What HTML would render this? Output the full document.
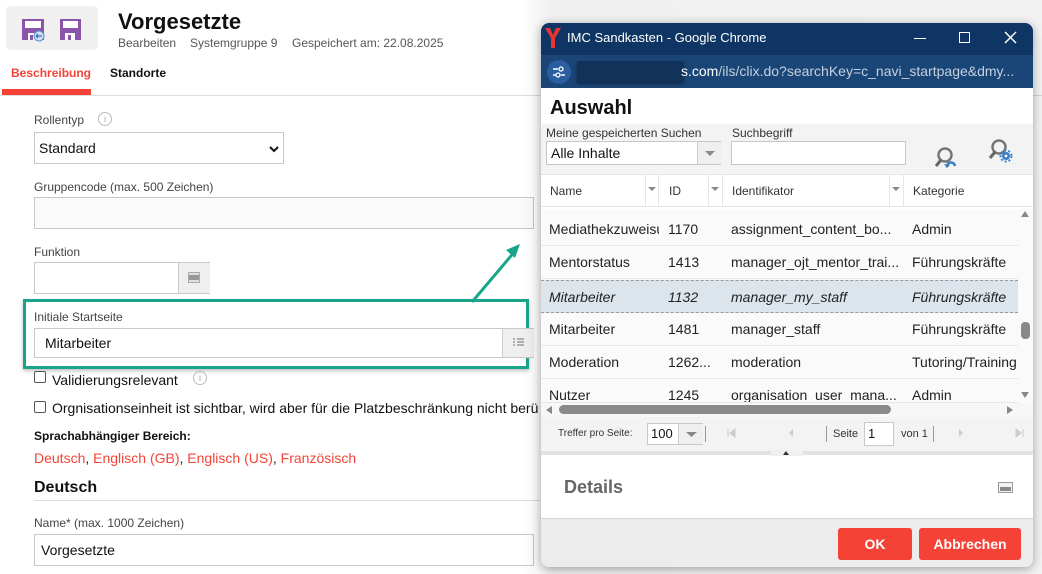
<!DOCTYPE html>
<html><head><meta charset="utf-8">
<style>
*{box-sizing:border-box;margin:0;padding:0}
body{width:1042px;height:574px;overflow:hidden;position:relative;background:#fff;font-family:"Liberation Sans",sans-serif;color:#222}
.a{position:absolute;white-space:nowrap}
.lbl{font-size:12px;color:#444}
.inp{position:absolute;border:1px solid #c8c8c8;background:#fff}
.btn{position:absolute;background:#efefef;border-left:1px solid #ccc;top:0;bottom:0}
.cb{position:absolute;width:12px;height:12px;border:1px solid #555;border-radius:2px;background:#fff}
.row{position:absolute;left:541px;width:477px;height:33px;border-bottom:1px solid #e8e8e8;font-size:14px;color:#222}
.row span{position:absolute;top:8px}
</style></head><body>
<!-- left page -->
<div class="a" style="left:6px;top:6px;width:92px;height:44px;background:#f0f0f0;border-radius:4px"></div>
<svg class="a" style="left:22px;top:18px" width="24" height="24" viewBox="0 0 24 24"><path d="M0 1h22v21H0z" fill="#8b55aa"/><path d="M3 3h16v7H3z" fill="#fff"/><path d="M6 15h8v7H6z" fill="#fff"/><path d="M8 17h3v5H8z" fill="#8b55aa"/><circle cx="17" cy="18" r="5" fill="#cfe1f4" stroke="#5b8fd0"/><path d="M14 18h6M14 18l2-2M14 18l2 2" stroke="#3b6fb7" stroke-width="1.2" fill="none"/></svg>
<svg class="a" style="left:60px;top:19px" width="22" height="22" viewBox="0 0 22 22"><path d="M0 0h21v21H0z" fill="#8b55aa"/><path d="M3 2h15v7H3z" fill="#fff"/><path d="M5 14h10v7H5z" fill="#fff"/><path d="M8 16h3v5H8z" fill="#8b55aa"/></svg>
<div class="a" style="left:118px;top:9px;font-size:22px;font-weight:bold;color:#111">Vorgesetzte</div>
<div class="a" style="left:118px;top:36px;font-size:12px;color:#555">Bearbeiten</div>
<div class="a" style="left:190px;top:36px;font-size:12px;color:#555">Systemgruppe 9</div>
<div class="a" style="left:292px;top:36px;font-size:12px;color:#555">Gespeichert am: 22.08.2025</div>
<div class="a" style="left:11px;top:66px;font-size:12px;font-weight:bold;color:#f44336">Beschreibung</div>
<div class="a" style="left:110px;top:66px;font-size:12px;font-weight:bold;color:#111">Standorte</div>
<div class="a" style="left:0;top:95px;width:1042px;height:1px;background:#ddd"></div>
<div class="a" style="left:2px;top:89px;width:89px;height:6px;background:#f44336"></div>

<div class="a lbl" style="left:34px;top:113px">Rollentyp</div>
<div class="a" style="left:98px;top:112px;width:14px;height:14px;border:1px solid #bbb;border-radius:50%;font-size:9px;color:#aaa;text-align:center;line-height:12px">i</div>
<div class="inp" style="left:34px;top:132px;width:250px;height:32px"><span class="a" style="left:4px;top:7px;font-size:14px;color:#111">Standard</span><svg class="a" style="left:234px;top:12px" width="10" height="8"><path d="M1 2l4 4 4-4" stroke="#111" stroke-width="2" fill="none"/></svg></div>
<div class="a lbl" style="left:34px;top:180px">Gruppencode (max. 500 Zeichen)</div>
<div class="inp" style="left:34px;top:197px;width:500px;height:32px;background:#fafafa"></div>
<div class="a lbl" style="left:34px;top:245px">Funktion</div>
<div class="inp" style="left:34px;top:262px;width:176px;height:32px"><div class="btn" style="left:143px;width:32px"><div class="a" style="left:10px;top:10px;width:10px;height:9px;background:#999;border:2px solid #e0e0e0;border-width:2px 0;box-shadow:0 0 0 1px #aaa"></div></div></div>
<div class="a" style="left:23px;top:299px;width:506px;height:70px;border:3px solid #18a58a;box-shadow:0 2px 4px rgba(0,0,0,.25)"></div>
<div class="a lbl" style="left:34px;top:310px">Initiale Startseite</div>
<div class="inp" style="left:34px;top:328px;width:500px;height:30px"><span class="a" style="left:10px;top:6px;font-size:14px;color:#111">Mitarbeiter</span><div class="btn" style="left:467px;width:32px"><svg class="a" style="left:9px;top:8px" width="13" height="11"><path d="M1 2h2M5 2h7M1 5h2M5 5h7M1 8h2M5 8h7" stroke="#999" stroke-width="1.6"/></svg></div></div>
<svg class="a" style="left:460px;top:236px" width="70" height="70"><path d="M12 66L56 14" stroke="#18a58a" stroke-width="3"/><path d="M60 8l-14 6 9 8z" fill="#18a58a"/></svg>
<div class="cb" style="left:34px;top:371px"></div>
<div class="a" style="left:52px;top:372px;font-size:14px;color:#111">Validierungsrelevant</div>
<div class="a" style="left:193px;top:371px;width:14px;height:14px;border:1px solid #bbb;border-radius:50%;font-size:9px;color:#aaa;text-align:center;line-height:12px">i</div>
<div class="cb" style="left:34px;top:401px"></div>
<div class="a" style="left:52px;top:400px;font-size:14px;color:#111">Orgnisationseinheit ist sichtbar, wird aber für die Platzbeschränkung nicht berü</div>
<div class="a" style="left:34px;top:429px;font-size:12px;font-weight:bold;color:#111">Sprachabhängiger Bereich:</div>
<div class="a" style="left:34px;top:450px;font-size:14px;color:#f44336">Deutsch<span style="color:#222">, </span>Englisch (GB)<span style="color:#222">, </span>Englisch (US)<span style="color:#222">, </span>Französisch</div>
<div class="a" style="left:34px;top:479px;font-size:16px;font-weight:bold;color:#111">Deutsch</div>
<div class="a" style="left:34px;top:500px;width:506px;height:1px;background:#ddd"></div>
<div class="a lbl" style="left:34px;top:516px">Name* (max. 1000 Zeichen)</div>
<div class="inp" style="left:34px;top:534px;width:500px;height:32px"><span class="a" style="left:6px;top:7px;font-size:14px;color:#111">Vorgesetzte</span></div>

<!-- shadow behind popup -->
<div class="a" style="left:520px;top:0;width:522px;height:574px;background:linear-gradient(90deg,rgba(0,0,0,0),rgba(0,0,0,.06) 30px,rgba(0,0,0,.05))"></div>
<!-- popup -->
<div class="a" style="left:541px;top:23px;width:492px;height:544px;background:#fff;border-radius:8px;overflow:hidden;box-shadow:0 2px 10px rgba(0,0,0,.35)">
 <div class="a" style="left:0;top:0;width:492px;height:32px;background:#0e3563"></div>
 <svg class="a" style="left:4px;top:5px" width="16" height="20"><path d="M0 0h5l3 7 3-7h5l-6 10v10H6V10z" fill="#e9342f"/></svg>
 <div class="a" style="left:26px;top:7px;font-size:13px;color:#fff">IMC Sandkasten - Google Chrome</div>
 <div class="a" style="left:373px;top:15px;width:12px;height:1px;background:#fff"></div>
 <div class="a" style="left:418px;top:9px;width:11px;height:11px;border:1.5px solid #fff"></div>
 <svg class="a" style="left:463px;top:8px" width="13" height="13"><path d="M1 1l11 11M12 1L1 12" stroke="#fff" stroke-width="1.5"/></svg>
 <div class="a" style="left:0;top:32px;width:492px;height:33px;background:#1a4577"></div>
 <div class="a" style="left:6px;top:37px;width:24px;height:24px;border-radius:50%;background:#2a5ea0"></div>
 <svg class="a" style="left:11px;top:42px" width="14" height="14"><path d="M1 4h5M9 10h4M1 10h3" stroke="#fff" stroke-width="1.4"/><circle cx="9" cy="4" r="2" stroke="#fff" fill="none" stroke-width="1.3"/><circle cx="6" cy="10" r="2" stroke="#fff" fill="none" stroke-width="1.3"/></svg>
 <div class="a" style="left:36px;top:38px;width:107px;height:21px;background:#12325a;box-shadow:0 2px 3px rgba(0,0,0,.4)"></div>
 <div class="a" style="left:140px;top:40px;font-size:14px;color:#c4d0de"><span style="color:#fff">s.com</span>/ils/clix.do?searchKey=c_navi_startpage&amp;dmy...</div>
 <div class="a" style="left:9px;top:74px;font-size:20px;font-weight:bold;color:#111">Auswahl</div>
 <div class="a" style="left:0;top:101px;width:492px;height:50px;background:#f3f3f3"></div>
 <div class="a" style="left:5px;top:103px;font-size:12px;color:#333">Meine gespeicherten Suchen</div>
 <div class="a" style="left:191px;top:103px;font-size:12px;color:#333">Suchbegriff</div>
 <div class="inp" style="left:5px;top:118px;width:175px;height:24px"><span class="a" style="left:4px;top:3px;font-size:14px;color:#111">Alle Inhalte</span><div class="btn" style="left:150px;width:24px"><svg class="a" style="left:6px;top:9px" width="12" height="6"><path d="M1 0h10L6 5z" fill="#888"/></svg></div></div>
 <div class="inp" style="left:190px;top:118px;width:175px;height:24px"></div>
 <svg class="a" style="left:392px;top:122px" width="26" height="26"><circle cx="12" cy="10" r="6.5" stroke="#777" stroke-width="2.5" fill="none"/><path d="M8 15l-5 6" stroke="#666" stroke-width="3"/><path d="M14 22a4 4 0 0 1 8-1" stroke="#3a7fc8" stroke-width="2.5" fill="none"/><path d="M11 19l3 4 3-3z" fill="#3a7fc8"/></svg>
 <svg class="a" style="left:447px;top:115px" width="26" height="26"><circle cx="11" cy="9" r="6.5" stroke="#777" stroke-width="2.5" fill="none"/><path d="M7 14l-5 6" stroke="#666" stroke-width="3"/><circle cx="18" cy="18" r="4" fill="#3a7fc8"/><circle cx="18" cy="18" r="5.5" stroke="#3a7fc8" stroke-width="2" stroke-dasharray="2 2" fill="none"/><circle cx="18" cy="18" r="1.4" fill="#fff"/></svg>
 <div class="a" style="left:0;top:151px;width:492px;height:33px;background:#fff;border-top:1px solid #e6e6e6;border-bottom:1px solid #e6e6e6"></div>
 <div class="a" style="left:104px;top:151px;width:1px;height:33px;background:#e6e6e6"></div>
 <div class="a" style="left:117px;top:151px;width:1px;height:33px;background:#e6e6e6"></div>
 <div class="a" style="left:167px;top:151px;width:1px;height:33px;background:#e6e6e6"></div>
 <div class="a" style="left:181px;top:151px;width:1px;height:33px;background:#e6e6e6"></div>
 <div class="a" style="left:348px;top:151px;width:1px;height:33px;background:#e6e6e6"></div>
 <div class="a" style="left:362px;top:151px;width:1px;height:33px;background:#e6e6e6"></div>
 <svg class="a" style="left:107px;top:164px" width="8" height="5"><path d="M0 0h8L4 4z" fill="#888"/></svg>
 <svg class="a" style="left:170px;top:164px" width="8" height="5"><path d="M0 0h8L4 4z" fill="#888"/></svg>
 <svg class="a" style="left:351px;top:164px" width="8" height="5"><path d="M0 0h8L4 4z" fill="#888"/></svg>
 <div class="a" style="left:9px;top:161px;font-size:12px;color:#333">Name</div>
 <div class="a" style="left:128px;top:161px;font-size:12px;color:#333">ID</div>
 <div class="a" style="left:191px;top:161px;font-size:12px;color:#333">Identifikator</div>
 <div class="a" style="left:372px;top:161px;font-size:12px;color:#333">Kategorie</div>
 <div class="a" style="left:0;top:186px;width:492px;height:210px;background:#fafafa"></div>
</div>
<div class="row" style="top:213px"><span style="left:8px;width:110px;overflow:hidden">Mediathekzuweisu</span><span style="left:127px">1170</span><span style="left:190px">assignment_content_bo...</span><span style="left:371px">Admin</span></div>
<div class="row" style="top:246px"><span style="left:8px">Mentorstatus</span><span style="left:127px">1413</span><span style="left:190px">manager_ojt_mentor_trai...</span><span style="left:371px">Führungskräfte</span></div>
<div class="row" style="top:280px;background:#dde5ec;border-top:1px dashed #999;border-bottom:1px dashed #999;font-style:italic"><span style="left:8px">Mitarbeiter</span><span style="left:127px">1132</span><span style="left:190px">manager_my_staff</span><span style="left:371px">Führungskräfte</span></div>
<div class="row" style="top:313px"><span style="left:8px">Mitarbeiter</span><span style="left:127px">1481</span><span style="left:190px">manager_staff</span><span style="left:371px">Führungskräfte</span></div>
<div class="row" style="top:346px"><span style="left:8px">Moderation</span><span style="left:127px">1262...</span><span style="left:190px">moderation</span><span style="left:371px">Tutoring/Training</span></div>
<div class="row" style="top:379px;height:24px;overflow:hidden"><span style="left:8px">Nutzer</span><span style="left:127px">1245</span><span style="left:190px">organisation_user_mana...</span><span style="left:371px">Admin</span></div>
<svg class="a" style="left:1020px;top:210px" width="10" height="8"><path d="M1 7h8L5 1z" fill="#888"/></svg>
<div class="a" style="left:1021px;top:322px;width:9px;height:17px;border-radius:4px;background:#888"></div>
<svg class="a" style="left:1020px;top:391px" width="10" height="8"><path d="M1 1h8L5 7z" fill="#888"/></svg>
<div class="a" style="left:541px;top:403px;width:492px;height:14px;background:#f7f7f7"></div>
<svg class="a" style="left:545px;top:405px" width="8" height="10"><path d="M7 1v8L1 5z" fill="#888"/></svg>
<div class="a" style="left:559px;top:405px;width:332px;height:9px;border-radius:5px;background:#8a8a8a"></div>
<svg class="a" style="left:1006px;top:405px" width="8" height="10"><path d="M1 1v8l6-4z" fill="#888"/></svg>
<div class="a" style="left:541px;top:417px;width:492px;height:34px;background:#f3f3f3"></div>
<div class="a" style="left:558px;top:428px;font-size:10px;color:#333">Treffer pro Seite:</div>
<div class="inp" style="left:647px;top:423px;width:56px;height:22px"><span class="a" style="left:3px;top:2px;font-size:13px;color:#111">100</span><div class="btn" style="left:30px;width:25px"><svg class="a" style="left:7px;top:8px" width="11" height="5"><path d="M0 0h11L5.5 5z" fill="#888"/></svg></div></div>
<div class="a" style="left:705px;top:426px;width:1px;height:16px;background:#999"></div>
<svg class="a" style="left:727px;top:428px" width="9" height="10"><path d="M1 1v8M8 1v8L3 5z" stroke="#ccc" fill="#ccc"/></svg>
<svg class="a" style="left:788px;top:428px" width="6" height="10"><path d="M5 1v8L1 5z" fill="#ccc"/></svg>
<div class="a" style="left:826px;top:426px;width:1px;height:16px;background:#999"></div>
<div class="a" style="left:833px;top:428px;font-size:11px;color:#333">Seite</div>
<div class="inp" style="left:864px;top:422px;width:30px;height:24px"><span class="a" style="left:3px;top:3px;font-size:13px;color:#111">1</span></div>
<div class="a" style="left:901px;top:428px;font-size:11px;color:#333">von 1</div>
<div class="a" style="left:933px;top:426px;width:1px;height:16px;background:#999"></div>
<svg class="a" style="left:958px;top:428px" width="6" height="10"><path d="M1 1v8l4-4z" fill="#ccc"/></svg>
<svg class="a" style="left:1015px;top:428px" width="9" height="10"><path d="M8 1v8M1 1v8l5-4z" stroke="#ccc" fill="#ccc"/></svg>
<div class="a" style="left:541px;top:451px;width:492px;height:4px;background:#e2e2e2"></div>
<div class="a" style="left:771px;top:450px;width:32px;height:6px;background:#f0f0f0;border-radius:3px 3px 0 0"></div>
<svg class="a" style="left:783px;top:451px" width="6" height="4"><path d="M0 4h6L3 0z" fill="#333"/></svg>
<div class="a" style="left:564px;top:477px;font-size:18px;font-weight:bold;color:#666">Details</div>
<div class="a" style="left:998px;top:482px;width:15px;height:11px;border:1px solid #999;background:#f3f3f3"><div style="margin:4px 1px 0;height:4px;background:#888"></div></div>
<div class="a" style="left:541px;top:518px;width:492px;height:49px;background:#ececec;border-top:1px solid #d6d6d6;border-radius:0 0 8px 8px"></div>
<div class="a" style="left:838px;top:528px;width:74px;height:32px;background:#f44336;border-radius:3px;color:#fff;font-weight:bold;font-size:14px;text-align:center;line-height:32px">OK</div>
<div class="a" style="left:919px;top:528px;width:102px;height:32px;background:#f44336;border-radius:3px;color:#fff;font-weight:bold;font-size:14px;text-align:center;line-height:32px">Abbrechen</div>
</body></html>
